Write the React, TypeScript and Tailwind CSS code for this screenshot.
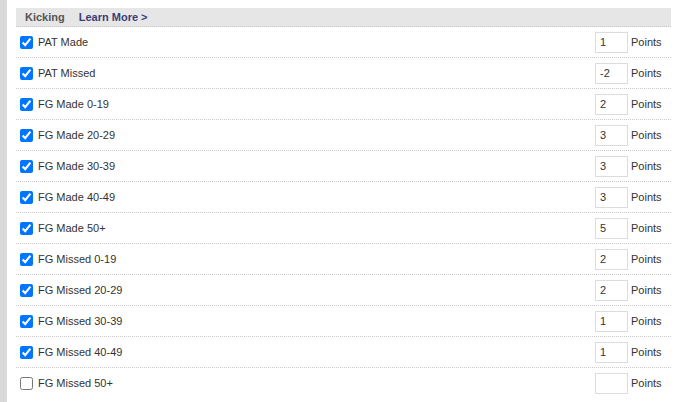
const rows: { label: string; value: string; checked: boolean }[] = [
  { label: 'PAT Made', value: '1', checked: true },
  { label: 'PAT Missed', value: '-2', checked: true },
  { label: 'FG Made 0-19', value: '2', checked: true },
  { label: 'FG Made 20-29', value: '3', checked: true },
  { label: 'FG Made 30-39', value: '3', checked: true },
  { label: 'FG Made 40-49', value: '3', checked: true },
  { label: 'FG Made 50+', value: '5', checked: true },
  { label: 'FG Missed 0-19', value: '2', checked: true },
  { label: 'FG Missed 20-29', value: '2', checked: true },
  { label: 'FG Missed 30-39', value: '1', checked: true },
  { label: 'FG Missed 40-49', value: '1', checked: true },
  { label: 'FG Missed 50+', value: '', checked: false },
]

export default function App() {
  return (
    <div
      className="flex h-[402px] w-[680px] overflow-hidden bg-white text-[11px] text-[#333]"
      style={{ fontFamily: '"Liberation Sans", Arial, sans-serif' }}
    >
      <div className="w-[7px] shrink-0 bg-[#d9d9d9]" />
      <div className="ml-[9px] w-[655px] pt-[8px]">
        {/* Section header */}
        <div className="flex h-[19px] items-center border-b border-dotted border-[#c8c8c8] bg-[#e6e6e6] pl-[9px] font-bold">
          <span className="text-[#555]">Kicking</span>
          <span className="ml-[14px] text-[#3b3d78]">Learn More &gt;</span>
        </div>

        {rows.map((row) => (
          <div
            key={row.label}
            className="flex h-[31px] items-center border-b border-dotted border-[#c8c8c8] last:border-b-0"
          >
            <input
              type="checkbox"
              defaultChecked={row.checked}
              className="ml-1 h-[13px] w-[13px] accent-[#0075ff]"
            />
            <span className="ml-[5px] flex-1">{row.label}</span>
            <input
              type="text"
              defaultValue={row.value}
              className="h-[21px] w-[33px] border border-[#dcdcdc] px-[4px] text-[11px] text-[#333] outline-none"
            />
            <span className="ml-[3px] w-[40px]">Points</span>
          </div>
        ))}
      </div>
    </div>
  )
}
